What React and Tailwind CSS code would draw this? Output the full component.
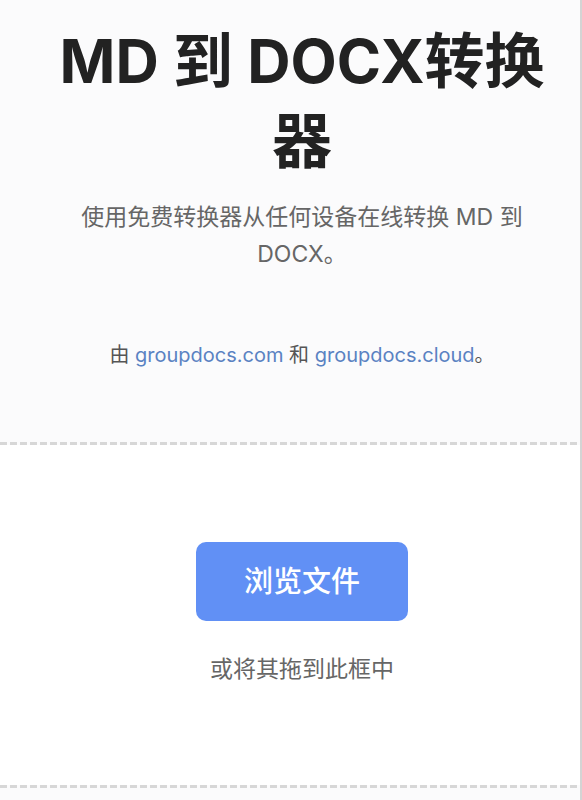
import React from 'react'

// 虚线分隔
function Dashes() {
  return (
    <div className="h-[3px] w-full bg-[repeating-linear-gradient(90deg,#d7d7d7_0_7px,transparent_7px_10px)]" />
  )
}

export default function App() {
  const font = { fontFamily: 'Inter, "Noto Sans CJK SC", sans-serif' }
  return (
    <div className="min-h-screen bg-[#fbfbfc] border-r-2 border-[#d4d4d4]" style={font}>
      <header className="pl-6 pt-[21px] pb-[73px] text-center">
        <h1 className="mx-auto max-w-[520px] text-[60px] leading-[80px] font-bold text-[#222]">
          MD 到 DOCX转换器
        </h1>
        <p className="mx-auto mt-[18px] max-w-[480px] text-[23px] leading-[37px] text-[#666]">
          使用免费转换器从任何设备在线转换 MD 到 DOCX。
        </p>
        <p className="mt-[68px] text-[20px] leading-[28px] text-[#555]">
          由 <a className="text-[#5a82c2]" href="#">groupdocs.com</a> 和{' '}
          <a className="text-[#5a82c2]" href="#">groupdocs.cloud</a>。
        </p>
      </header>

      <Dashes />

      <section className="bg-white h-[340px] pl-6 pt-[97px] flex flex-col items-center">
        <button className="w-[212px] h-[79px] rounded-[10px] bg-[#6190f5] text-white text-[29px] font-medium">
          浏览文件
        </button>
        <p className="mt-[33px] text-[23px] leading-[30px] text-[#666]">或将其拖到此框中</p>
      </section>

      <Dashes />
    </div>
  )
}
